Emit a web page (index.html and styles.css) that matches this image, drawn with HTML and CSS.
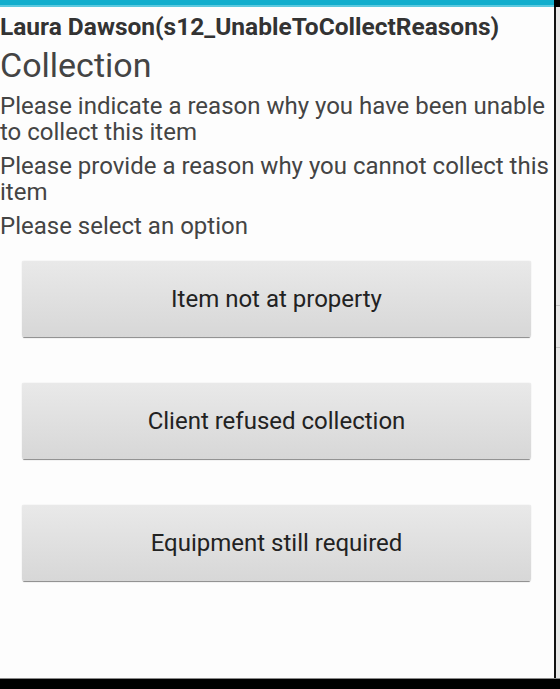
FILE: index.html
```html
<!DOCTYPE html>
<html lang="en">

<head>
    <meta charset="UTF-8">
    <meta name="viewport" content="width=device-width, initial-scale=1.0">
    <title>Collection</title>
    <link rel="stylesheet" href="styles.css">
</head>

<body>
    <div class="screen">
        <div class="topbar"></div>
        <div class="main">
            <div class="content">
                <div class="who">Laura Dawson(s12_UnableToCollectReasons)</div>
                <h1 class="title">Collection</h1>
                <p class="line">Please indicate a reason why you have been unable to collect this item</p>
                <p class="line">Please provide a reason why you cannot collect this item</p>
                <p class="line">Please select an option</p>
                <div class="options">
                    <button class="option">Item not at property</button>
                    <button class="option">Client refused collection</button>
                    <button class="option">Equipment still required</button>
                </div>
            </div>
            <div class="edge">
                <div class="tick first"></div>
                <div class="tick"></div>
            </div>
        </div>
        <div class="navbar"></div>
    </div>
</body>

</html>
```

FILE: styles.css
```css
* {
    margin: 0;
    padding: 0;
    box-sizing: border-box;
}

body {
    background-color: #000;
    font-family: Roboto, "Liberation Sans", sans-serif;
}

.screen {
    display: flex;
    flex-direction: column;
    width: 560px;
    height: 689px;
}

.topbar {
    height: 7px;
    margin-right: 6px;
    background-color: #12aecd;
    border-bottom: 2px solid #5cc9df;
}

.main {
    display: flex;
    flex: 1;
}

.content {
    flex: 1;
    background-color: #fdfdfd;
    color: #333;
    padding-top: 5px;
}

.who {
    font-size: 24.5px;
    font-weight: 700;
    line-height: 30px;
    color: #333;
}

.title {
    font-size: 34px;
    font-weight: 400;
    line-height: 40px;
    margin-top: 3px;
    color: #444;
}

.line {
    font-size: 24px;
    line-height: 26px;
    margin-top: 8px;
    color: #444;
}

.options {
    display: flex;
    flex-direction: column;
    gap: 46px;
    margin: 22px 23px 0 22px;
}

.option {
    height: 76px;
    font-family: Roboto, "Liberation Sans", sans-serif;
    font-size: 24px;
    color: #222;
    border: none;
    border-radius: 2px;
    background: linear-gradient(#e9e9e9, #d7d7d7);
    box-shadow: 0 2px 1px -1px rgba(0, 0, 0, 0.45), 0 0 1px rgba(0, 0, 0, 0.25);
}

.edge {
    width: 6px;
    border-left: 2px solid #111;
    background-color: #e6e6e6;
}

.tick {
    height: 1px;
    background-color: #c4c4c4;
    margin-top: 41px;
}

.tick.first {
    margin-top: 298px;
}

.navbar {
    height: 11px;
    border-top: 1px solid #8a8a8a;
    background-color: #000;
}
```
